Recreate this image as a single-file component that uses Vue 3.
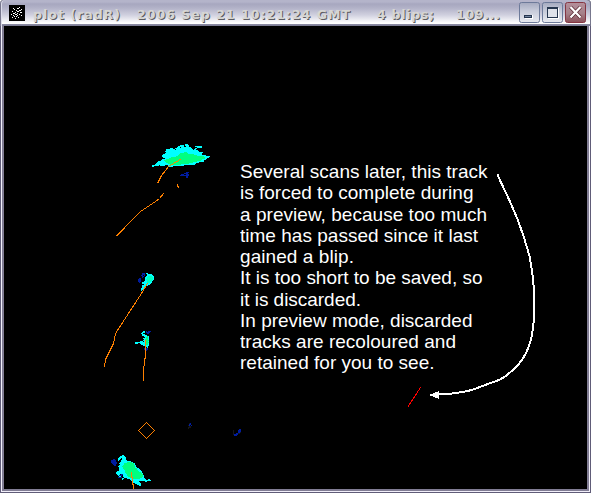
<script setup>
const lines = [
  ['Several scans later, this track', 247.5],
  ['is forced to complete during', 233.5],
  ['a preview, because too much', 247],
  ['time has passed since it last', 238],
  ['gained a blip.', 114],
  ['It is too short to be saved, so', 242.5],
  ['it is discarded.', 121],
  ['In preview mode, discarded', 232.5],
  ['tracks are recoloured and', 216],
  ['retained for you to see.', 194.5],
]
const title = [
  ['plot (radR)', 33, 87],
  ['2006 Sep 21 10:21:24 GMT', 137, 213],
  ['4 blips;', 377, 57],
  ['109...', 456, 44],
]

// Each run is [y, first x, last x] of one scan line of an echo.
const runs = (list) => list.map(([y, a, b]) => `M${a} ${y}.5h${b - a + 1}`).join('')

const cyan = runs([
  [144, 185, 187], [145, 180, 183], [145, 185, 188], [146, 178, 183], [146, 186, 188], [146, 195, 201],
  [147, 177, 179], [147, 181, 190], [147, 197, 201], [148, 170, 172], [148, 175, 191], [148, 195, 196],
  [149, 166, 174], [149, 176, 192], [149, 194, 195], [150, 166, 197], [151, 165, 198], [152, 166, 202],
  [153, 165, 201], [154, 163, 201], [155, 162, 205], [156, 162, 209], [157, 163, 208], [158, 165, 206],
  [159, 162, 205], [160, 161, 203], [161, 158, 203], [162, 157, 198], [163, 156, 195], [164, 155, 194],
  [165, 152, 158], [165, 160, 164], [165, 168, 183], [166, 152, 153], [166, 169, 172],

  [273, 146, 147], [274, 147, 151], [275, 147, 152], [276, 146, 153], [277, 145, 153], [278, 145, 153],
  [279, 145, 153], [280, 145, 152], [281, 144, 151], [282, 142, 151], [283, 142, 150], [284, 144, 149],
  [285, 142, 147], [286, 142, 144], [287, 142, 143], [288, 141, 143], [289, 141, 142], [290, 141, 141],
  [331, 143, 144], [332, 142, 144], [333, 141, 142], [334, 142, 144], [335, 142, 146], [336, 144, 148],
  [337, 145, 148], [338, 143, 148], [339, 144, 148], [340, 143, 148], [341, 140, 142], [341, 144, 148],
  [342, 135, 148], [343, 135, 137], [343, 140, 148], [344, 141, 148], [345, 143, 148], [346, 145, 147],
  [347, 147, 147],

  [455, 122, 123], [456, 120, 124], [457, 119, 125], [458, 118, 120], [458, 122, 125], [459, 118, 119],
  [459, 122, 125], [460, 118, 118], [460, 121, 126], [461, 121, 130], [462, 120, 132], [463, 119, 134],
  [464, 120, 134], [465, 119, 135], [466, 118, 135], [467, 119, 136], [468, 119, 138], [469, 119, 139],
  [470, 119, 140], [471, 117, 141], [472, 116, 141], [473, 116, 142], [474, 117, 119], [474, 122, 142],
  [475, 118, 119], [475, 123, 143], [476, 119, 120], [476, 123, 143], [477, 120, 121], [477, 124, 143],
  [478, 122, 123], [478, 127, 144], [479, 122, 122], [479, 130, 145], [479, 148, 149], [480, 131, 150],
  [481, 132, 138], [481, 145, 146], [482, 133, 139], [483, 135, 140], [484, 137, 140], [485, 139, 140],
])
const green = runs([
  [152, 184, 186], [153, 180, 187], [154, 179, 193], [155, 178, 196], [156, 176, 203], [157, 171, 204],
  [158, 169, 204], [159, 166, 201], [160, 164, 200], [161, 165, 196], [162, 166, 192], [163, 168, 188],
  [164, 170, 180],
  [336, 147, 147], [337, 146, 147], [338, 146, 147], [339, 145, 147], [340, 145, 148], [341, 145, 147],
  [342, 145, 148], [343, 145, 147], [344, 146, 147],
  [462, 127, 131], [463, 124, 133], [464, 124, 133], [465, 123, 134], [466, 122, 134], [467, 123, 134],
  [468, 123, 136], [469, 124, 136], [470, 125, 137], [471, 125, 138], [472, 125, 140], [473, 126, 141],
  [474, 127, 142], [475, 127, 142], [476, 128, 142], [477, 130, 141], [478, 133, 139],
])
const mint = runs([
  [276, 148, 151], [277, 147, 152], [278, 147, 152], [279, 146, 152], [280, 147, 151], [281, 147, 150],
  [282, 147, 149],
])
const blue = runs([
  [172, 186, 188], [173, 184, 187], [174, 181, 183], [174, 186, 188], [175, 180, 188], [176, 186, 187],
  [177, 186, 187],
  [273, 142, 144], [274, 142, 144], [275, 141, 142], [275, 144, 144], [276, 142, 143], [277, 142, 142],
  [278, 139, 140], [279, 138, 140], [280, 138, 140], [281, 138, 140], [282, 139, 139],
  [331, 146, 146], [331, 148, 150], [332, 146, 149], [333, 147, 148],
  [348, 144, 147], [349, 144, 147], [350, 145, 146],
  [459, 113, 114], [460, 111, 115], [461, 111, 115], [462, 111, 116], [463, 112, 116], [464, 113, 115],
  [465, 114, 115], [474, 121, 122], [475, 119, 121], [477, 118, 121],
  [423, 190, 190], [424, 189, 190], [425, 189, 189], [425, 191, 191],
  [429, 239, 240], [430, 238, 240], [431, 238, 240], [432, 238, 239], [433, 236, 237], [434, 234, 237],
  [435, 234, 236],
])
const faint = runs([
  [423, 189, 189], [425, 188, 188], [426, 189, 190], [427, 188, 190], [428, 188, 188],
  [430, 233, 233], [431, 233, 233], [432, 233, 233], [433, 233, 233], [434, 233, 233],
  [432, 240, 240], [433, 238, 239],
])
</script>

<template>
  <div class="window">
    <header class="titlebar">
      <svg class="bar" width="591" height="26" viewBox="0 0 591 26">
        <g shape-rendering="crispEdges">
          <rect x="9" y="5" width="16" height="16" fill="#000" />
          <path
            d="M19 7h1M13 8h1M17 8h2M14 9h1M21 9h1M16 10h1M19 10h2M12 11h1M17 11h2M15 12h1M20 12h2M13 13h2M17 13h1M11 14h1M15 14h2M19 14h1M13 15h1M17 15h1M21 15h1M14 16h1M16 16h1M12 17h1M18 17h1M15 18h1"
            transform="translate(0 .5)" stroke="#fff" />
        </g>
        <g class="title">
          <text v-for="t in title" :key="t[0]" :x="t[1]" y="19" :textLength="t[2]">{{ t[0] }}</text>
        </g>
        <defs>
          <linearGradient id="btn" x1="0" y1="0" x2="0" y2="1">
            <stop offset="0" stop-color="#a4a9bf" />
            <stop offset=".4" stop-color="#c6cad9" />
            <stop offset="1" stop-color="#e8eaf0" />
          </linearGradient>
          <linearGradient id="close" x1="0" y1="0" x2="0" y2="1">
            <stop offset="0" stop-color="#b48f9b" />
            <stop offset=".55" stop-color="#a58089" />
            <stop offset="1" stop-color="#8c5059" />
          </linearGradient>
        </defs>
        <rect x="519.5" y="2.5" width="20" height="20" rx="2" fill="url(#btn)" stroke="#6d7a9a" />
        <rect x="542.5" y="2.5" width="20" height="20" rx="2" fill="url(#btn)" stroke="#6d7a9a" />
        <rect x="565.5" y="2.5" width="20" height="20" rx="2" fill="url(#close)" stroke="#853542" />
        <rect x="525" y="15" width="8" height="4" fill="#fff" />
        <rect x="524" y="15" width="8" height="3" fill="#26364f" />
        <rect x="525" y="16" width="6" height="1" fill="#7385a0" />
        <rect x="548.5" y="8.5" width="10" height="10" fill="none" stroke="#fff" />
        <rect x="547.5" y="7.5" width="10" height="10" fill="#dfe2ea" stroke="#26364f" />
        <path d="M547 8h11" stroke="#26364f" stroke-width="2" />
        <path d="M570.5 7l10 10.5M580.5 7l-10 10.5" stroke="#54222c" stroke-width="3.6" />
        <path d="M570.5 7l10 10.5M580.5 7l-10 10.5" stroke="#fff" stroke-width="2.3" />
      </svg>
    </header>

    <main class="plot">
      <svg class="radar" width="583" height="463" viewBox="4 26 583 463" shape-rendering="crispEdges">
        <path :d="cyan" stroke="#00ffff" />
        <path :d="green" stroke="#00ff80" />
        <path :d="mint" stroke="#00ffc0" />
        <path :d="blue" stroke="#001ca0" />
        <path :d="faint" stroke="#15161b" />
        <g fill="none" stroke="#ff8000">
          <path d="M181.5 158.500l-3 2l-5 3l-5 3l-3 4l-4 5l-2 4l-2 4" />
          <path d="M177.5 184v3M178.5 186v2" />
          <path d="M163.5 193.5l-4 5l-4 3l-15 10l-24 24.5" />
          <path d="M147.5 283.5l-3 5l-5 8l-24 37l-2 10l-6 12l-2 4l-1 8" />
          <path d="M145.5 340v17l-1 3v4l-1 4v13" />
          <path d="M146.5 422.5l8 8l-8 8l-8-8z" />
          <path d="M131.5 472v4l1 3v5l1 1v4" />
        </g>
        <path d="M420.5 387.5l-13 20" fill="none" stroke="#ff0000" />
        <path d="M497.5 174.5C502 186 505 190 507.500 196L517.500 219Q524 236 529.500 256C533.500 275 536 303 533.500 323C532.500 335 530.500 344 526.500 352Q521.500 363 510.500 372Q502 380 492 382.500L472 390Q453 394.500 436 394.500" fill="none" stroke="#fff" stroke-width="2" />
        <path d="M429 395l10-4v8z" fill="#fff" />
      </svg>
      <svg class="note" width="260" height="220" viewBox="0 0 260 220">
        <text v-for="(l, i) in lines" :key="i" x="0" :y="18 + i * 21.25" :textLength="l[1]">{{ l[0] }}</text>
      </svg>
    </main>
  </div>
</template>

<style>
body {
  margin: 0;
  background: #fff;
}
</style>

<style scoped>
.window {
  box-sizing: border-box;
  width: 591px;
  height: 493px;
  background: #000;
  border-radius: 4px 4px 0 0;
  display: flex;
  flex-direction: column;
}
.titlebar {
  height: 26px;
  flex: none;
  box-sizing: border-box;
  border-radius: 4px 4px 0 0;
  background: linear-gradient(#b4b4ca 0, #b4b4ca 2px, #a7a7bf 4px, #b2b2c8 8px, #d0d0df 15px, #fff 23px, #fff 24px, #8e8ea6 24px, #77778f 26px);
  box-shadow: inset 1px 0 #77778d, inset 2px 0 #ddddeb, inset -1px 0 #77778d;
}
.bar {
  display: block;
}
.title {
  font: bold 12.5px "DejaVu Sans", sans-serif;
  fill: #d6d6d3;
  text-shadow: 1px 1px 0 #5c5c62;
}
.plot {
  position: relative;
  box-sizing: border-box;
  height: 467px;
  border-style: solid;
  border-color: #817d94;
  border-width: 0 4px 4px;
}
.plot::before {
  content: "";
  position: absolute;
  inset: 0 -3px -3px;
  border: solid #f2effa;
  border-width: 0 1px 1px;
}
.plot::after {
  content: "";
  position: absolute;
  inset: 0 -4px -4px;
  border: solid #605c78;
  border-width: 0 1px 1px;
}
.radar {
  display: block;
}
.note {
  position: absolute;
  left: 236px;
  top: 134px;
  font: 19px "Liberation Sans", Arial, sans-serif;
  fill: #fff;
}
</style>
